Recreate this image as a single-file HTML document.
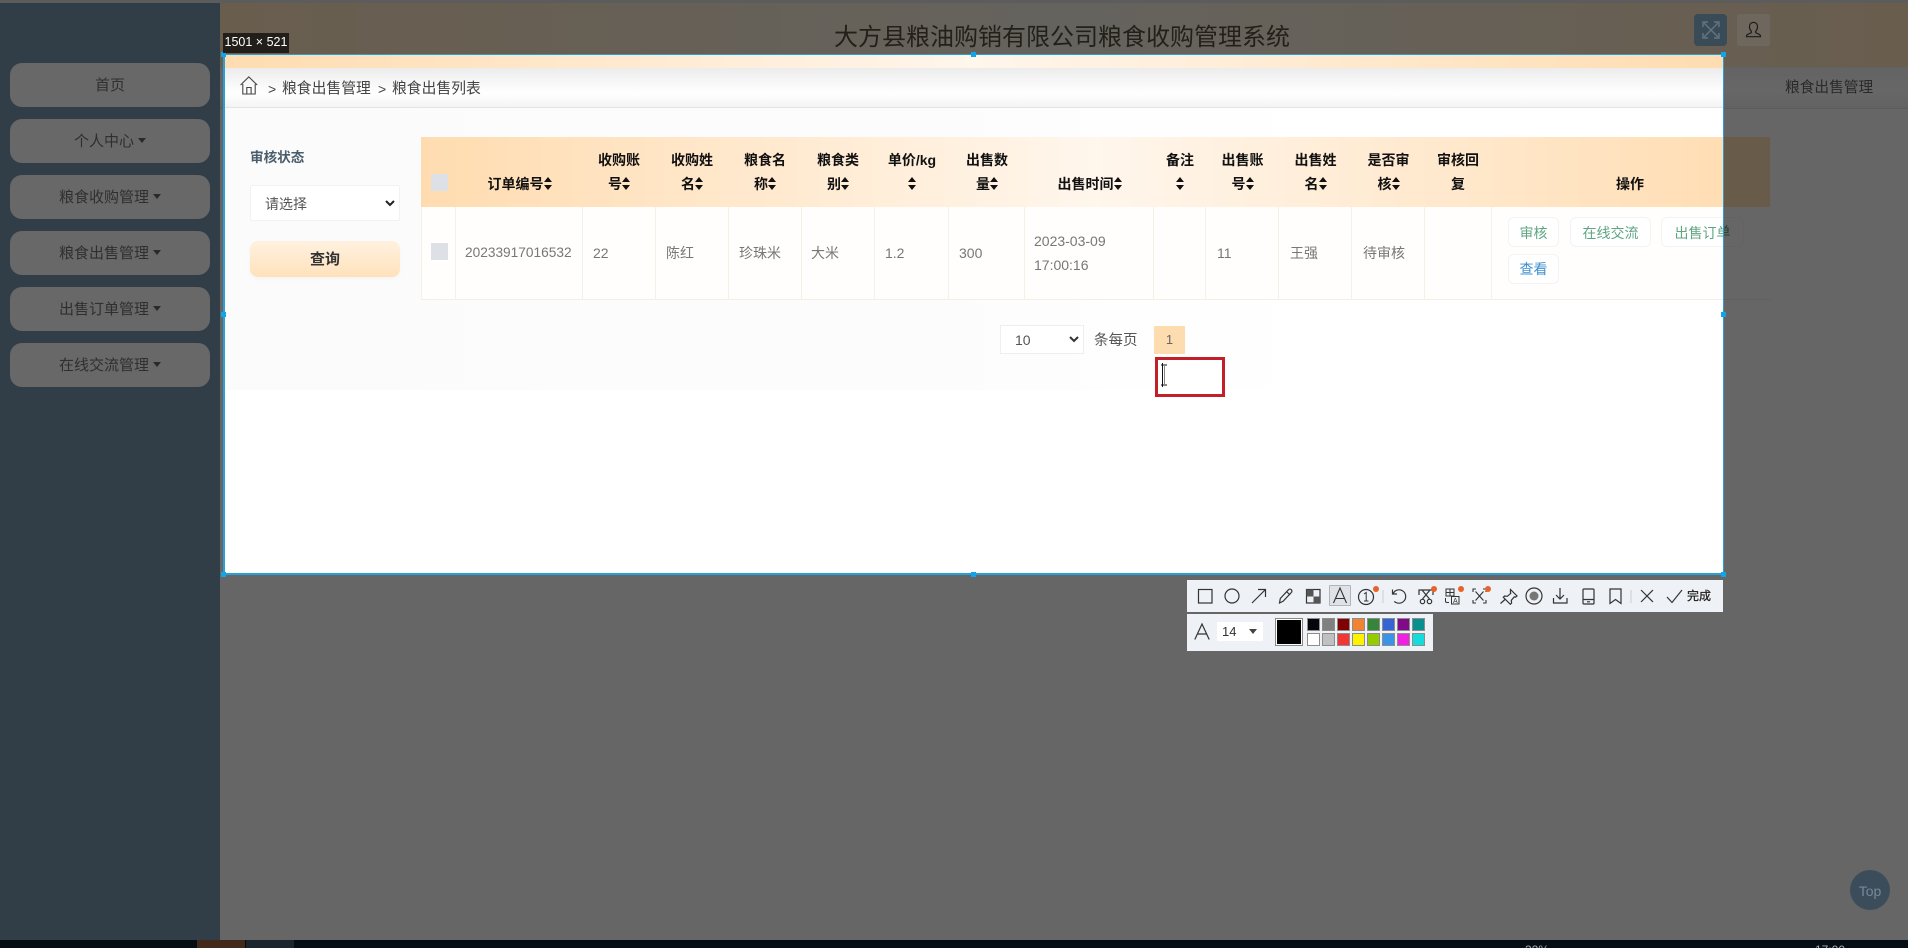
<!DOCTYPE html>
<html lang="zh"><head><meta charset="utf-8"><title>粮食收购管理系统</title>
<style>
*{box-sizing:border-box}
html,body{margin:0;padding:0}
body{width:1908px;height:948px;overflow:hidden;position:relative;background:#666;font-family:"Liberation Sans","Noto Sans CJK SC",sans-serif;font-size:14px}
.a{position:absolute}
.m{position:absolute;left:10px;width:200px;height:44px;border-radius:12px;background:#686868;color:#2f2f2f;font-size:15px;line-height:46px;text-align:center}
.m i{display:inline-block;width:0;height:0;border:4px solid transparent;border-top:5px solid #2a2a2a;border-bottom:0;margin-left:4px;vertical-align:3px}
#sel{position:absolute;left:223px;top:54px;width:1501px;height:521px;overflow:hidden;background:#fff}
#in{position:absolute;left:-223px;top:-54px;width:1908px;height:948px}
#bd{position:absolute;left:223px;top:54px;width:1501px;height:521px;border:1px solid #27a0d8;border-left-width:2px;border-bottom-width:2px;pointer-events:none}
.h{position:absolute;width:5px;height:5px;background:#10a5e8}
.th{position:absolute;top:137px;height:70px;text-align:center;font-weight:bold;color:#111;font-size:14px;line-height:24px;padding-top:11px}
.th svg{display:inline-block;vertical-align:-1px}
.v{position:absolute;top:207px;height:92px;width:1px;background:#f6f1e6}
.td{position:absolute;color:#777;font-size:14px;line-height:24px}
.btn{position:absolute;height:30px;line-height:29px;text-align:center;border:1px solid #f3f3f3;border-radius:6px;background:#fff;font-size:14px;color:#5fa582}
.sw{position:absolute;width:13px;height:13px;border:1px solid #8d8d8d}
svg{display:block;overflow:visible}
select{appearance:none;-webkit-appearance:none;outline:none;margin:0}
</style></head><body>

<!-- dimmed page -->
<div class="a" style="left:0;top:0;width:1908px;height:3px;background:#5c5c5c"></div>
<div class="a" style="left:220px;top:3px;width:1688px;height:64px;background:linear-gradient(90deg,#695d4e,#65635e 50%,#695d4e)"></div>
<div class="a" style="left:220px;top:67px;width:1688px;height:41px;background:linear-gradient(180deg,#636363,#676767 60%,#626262)"></div>
<div class="a" style="left:220px;top:108px;width:1688px;height:1px;background:#5c5c5c"></div>
<div class="a" style="left:223px;top:20px;width:1500px;height:34px;text-align:center;font-size:24px;line-height:34px;color:#232019"><span style="position:relative;left:89px;top:1px">大方县粮油购销有限公司粮食收购管理系统</span></div>
<div class="a" style="left:1785px;top:78px;font-size:14.7px;line-height:20px;color:#2a2a2a;white-space:nowrap">粮食出售管理</div>

<div class="a" style="left:1694px;top:14px;width:33px;height:32px;background:#394b57;border-radius:4px">
<svg width="33" height="32" fill="none" stroke="#62757f" stroke-width="1.400"><path d="M10 9l14 14M24 9L10 23"/><path d="M9 13V8h5M25 13V8h-5M9 19v5h5M25 19v5h-5"/></svg></div>
<div class="a" style="left:1737px;top:14px;width:33px;height:32px;background:#6e675e;border-radius:2px">
<svg width="33" height="32" fill="none" stroke="#1c1c1c" stroke-width="1.200"><path d="M12.500 13c0-3 1.800-4.600 4-4.600s4 1.600 4 4.600c0 2-1 3.400-1.700 4.200-.5.700-.1 1.500.5 1.800l3.200 1.500c.8.400 1 1.100 1 2.200H9.500c0-1.100.2-1.800 1-2.200l3.200-1.500c.6-.3 1-1.100.5-1.800-.7-.8-1.700-2.200-1.700-4.200z"/></svg></div>

<div class="a" style="left:1724px;top:137px;width:46px;height:70px;background:#685b4a"></div>
<div class="a" style="left:1724px;top:299px;width:46px;height:1px;background:#62605c"></div>
<div class="a" style="left:1661px;top:217px;width:83px;height:30px;line-height:29px;text-align:center;border:1px solid #636363;border-radius:6px;font-size:14px;color:#264230">出售订单</div>

<div class="a" style="left:1850px;top:870px;width:40px;height:40px;border-radius:50%;background:#3b4d5b;color:#76889a;font-size:14px;line-height:42px;text-align:center">Top</div>

<!-- sidebar -->
<div class="a" style="left:0;top:3px;width:220px;height:937px;background:#313e48"></div>
<div class="m" style="top:63px">首页</div>
<div class="m" style="top:119px">个人中心<i></i></div>
<div class="m" style="top:175px">粮食收购管理<i></i></div>
<div class="m" style="top:231px">粮食出售管理<i></i></div>
<div class="m" style="top:287px">出售订单管理<i></i></div>
<div class="m" style="top:343px">在线交流管理<i></i></div>

<!-- taskbar -->
<div class="a" style="left:0;top:940px;width:1908px;height:8px;background:#030e15;overflow:hidden">
<div class="a" style="left:197px;top:0;width:48px;height:8px;background:#42291a"></div>
<div class="a" style="left:246px;top:0;width:48px;height:8px;background:#1a252e"></div>
<div class="a" style="left:1525px;top:3px;color:#aab;font-size:12px;line-height:14px">32%</div>
<div class="a" style="left:1815px;top:3px;color:#aab;font-size:12px;line-height:14px">17:00</div>
</div>

<!-- selection -->
<div id="sel"><div id="in">
<div class="a" style="left:223px;top:54px;width:1501px;height:14px;background:linear-gradient(90deg,#ffdcb0,#fff6ec 50%,#ffdcb0)"></div>
<div class="a" style="left:223px;top:68px;width:1501px;height:40px;background:linear-gradient(180deg,#ececec,#fff 65%,#f4f4f4);border-bottom:1px solid #e4e4e4"></div>
<div class="a" style="left:223px;top:108px;width:1100px;height:282px;background:linear-gradient(90deg,#fbfbfb,#fcfcfc 60%,#fff)"></div>

<svg class="a" style="left:240px;top:76px" width="18" height="19" fill="none" stroke="#444" stroke-width="1.100"><path d="M.6 9L8.800.9 17.200 9M2.800 8v10h12.400V8M6.800 18v-6.500h4.300V18"/></svg>
<div class="a" style="left:268px;top:79px;font-size:14px;line-height:20px;color:#444">&gt;</div>
<div class="a" style="left:282px;top:79px;font-size:14.8px;line-height:20px;color:#444;white-space:nowrap">粮食出售管理</div>
<div class="a" style="left:378px;top:79px;font-size:14px;line-height:20px;color:#444">&gt;</div>
<div class="a" style="left:392px;top:79px;font-size:14.8px;line-height:20px;color:#444;white-space:nowrap">粮食出售列表</div>

<div class="a" style="left:250px;top:148px;font-size:13.6px;font-weight:bold;line-height:20px;color:#4a5d6c;white-space:nowrap">审核状态</div>
<select class="a" style="left:250px;top:185px;width:150px;height:36px;background:#fff;border:1px solid #f2f2f2;color:#555;font:14px 'Liberation Sans','Noto Sans CJK SC',sans-serif;padding:2px 0 0 14px;border-radius:2px"><option>请选择</option></select>
<svg class="a" style="left:385px;top:200px" width="10" height="7" fill="none" stroke="#222" stroke-width="2"><path d="M1 1l4 4 4-4"/></svg>
<div class="a" style="left:250px;top:241px;width:150px;height:36px;border-radius:8px;background:linear-gradient(180deg,#fff1df,#ffe2bc);box-shadow:0 2px 4px rgba(0,0,0,.03);text-align:center;line-height:38px;font-weight:bold;font-size:15px;color:#333">查询</div>

<!-- table -->
<div class="a" style="left:421px;top:137px;width:1348px;height:70px;background:linear-gradient(90deg,#ffdcb0,#fff6ec 50%,#ffdcb0)"></div>
<div class="a" style="left:421px;top:207px;width:1348px;height:92px;background:#fffefc"></div>
<div class="a" style="left:421px;top:299px;width:1348px;height:1px;background:#f3efe6"></div>
<div class="v" style="left:421px"></div><div class="v" style="left:455px"></div><div class="v" style="left:582px"></div><div class="v" style="left:655px"></div><div class="v" style="left:728px"></div><div class="v" style="left:801px"></div><div class="v" style="left:874px"></div><div class="v" style="left:948px"></div><div class="v" style="left:1024px"></div><div class="v" style="left:1153px"></div><div class="v" style="left:1205px"></div><div class="v" style="left:1278px"></div><div class="v" style="left:1351px"></div><div class="v" style="left:1424px"></div><div class="v" style="left:1491px"></div>

<div class="a" style="left:431px;top:174px;width:17px;height:17px;background:#dde1e6"></div>
<div class="a" style="left:431px;top:243px;width:17px;height:17px;background:#dde1e6"></div>

<svg width="0" height="0" style="position:absolute"><defs><symbol id="s" viewBox="0 0 8 13"><path d="M4 0l4 5H0zM4 13l4-5H0z" fill="#111"/></symbol></defs></svg>

<div class="th" style="left:456px;width:127px;padding-top:35px">订单编号<svg width="8" height="13"><use href="#s"/></svg></div>
<div class="th" style="left:583px;width:72px">收购账<br>号<svg width="8" height="13"><use href="#s"/></svg></div>
<div class="th" style="left:655px;width:74px">收购姓<br>名<svg width="8" height="13"><use href="#s"/></svg></div>
<div class="th" style="left:729px;width:72px">粮食名<br>称<svg width="8" height="13"><use href="#s"/></svg></div>
<div class="th" style="left:801px;width:74px">粮食类<br>别<svg width="8" height="13"><use href="#s"/></svg></div>
<div class="th" style="left:875px;width:74px">单价/kg<br><svg width="8" height="13"><use href="#s"/></svg></div>
<div class="th" style="left:949px;width:76px">出售数<br>量<svg width="8" height="13"><use href="#s"/></svg></div>
<div class="th" style="left:1025px;width:129px;padding-top:35px">出售时间<svg width="8" height="13"><use href="#s"/></svg></div>
<div class="th" style="left:1154px;width:52px">备注<br><svg width="8" height="13"><use href="#s"/></svg></div>
<div class="th" style="left:1206px;width:73px">出售账<br>号<svg width="8" height="13"><use href="#s"/></svg></div>
<div class="th" style="left:1279px;width:73px">出售姓<br>名<svg width="8" height="13"><use href="#s"/></svg></div>
<div class="th" style="left:1352px;width:73px">是否审<br>核<svg width="8" height="13"><use href="#s"/></svg></div>
<div class="th" style="left:1425px;width:66px">审核回<br>复</div>
<div class="th" style="left:1491px;width:278px;padding-top:35px">操作</div>

<div class="td" style="left:465px;top:241px;font-size:13.7px">20233917016532</div>
<div class="td" style="left:593px;top:241px">22</div>
<div class="td" style="left:666px;top:241px">陈红</div>
<div class="td" style="left:739px;top:241px">珍珠米</div>
<div class="td" style="left:811px;top:241px">大米</div>
<div class="td" style="left:885px;top:241px">1.2</div>
<div class="td" style="left:959px;top:241px">300</div>
<div class="td" style="left:1034px;top:229px;white-space:nowrap">2023-03-09</div>
<div class="td" style="left:1034px;top:253px;white-space:nowrap">17:00:16</div>
<div class="td" style="left:1217px;top:241px">11</div>
<div class="td" style="left:1290px;top:241px">王强</div>
<div class="td" style="left:1363px;top:241px">待审核</div>

<div class="btn" style="left:1508px;top:217px;width:51px;line-height:30px">审核</div>
<div class="btn" style="left:1570px;top:217px;width:81px;line-height:30px">在线交流</div>
<div class="btn" style="left:1661px;top:217px;width:83px;line-height:30px">出售订单</div>
<div class="btn" style="left:1508px;top:254px;width:51px;color:#3f8fd0">查看</div>

<!-- pagination -->
<select class="a" style="left:1000px;top:325px;width:84px;height:29px;background:#fff;border:1px solid #eeeeee;color:#555;font:14px 'Liberation Sans',sans-serif;padding-left:14px"><option>10</option></select>
<svg class="a" style="left:1069px;top:336px" width="10" height="7" fill="none" stroke="#333" stroke-width="2"><path d="M1 1l4 4 4-4"/></svg>
<div class="a" style="left:1094px;top:331px;font-size:14.5px;line-height:20px;color:#555;white-space:nowrap">条每页</div>
<div class="a" style="left:1154px;top:326px;width:31px;height:28px;background:#fddcb0;color:#666;text-align:center;line-height:28px;font-size:13px">1</div>
<div class="a" style="left:1155px;top:357px;width:70px;height:40px;border:3px solid #c21f28;background:#fff"></div>
<svg class="a" style="left:1160px;top:362px" width="8" height="26" fill="none" stroke="#111" stroke-width="1"><path d="M2.500 1v24M1 3h6M1 23h6"/><path d="M4.500 3v20" stroke="#888"/></svg>
</div></div>

<div id="bd"></div>
<div class="h" style="left:221px;top:52px"></div><div class="h" style="left:971px;top:52px"></div><div class="h" style="left:1721px;top:52px"></div>
<div class="h" style="left:221px;top:312px"></div><div class="h" style="left:1721px;top:312px"></div>
<div class="h" style="left:221px;top:572px"></div><div class="h" style="left:971px;top:572px"></div><div class="h" style="left:1721px;top:572px"></div>
<div class="a" style="left:223px;top:33px;width:66px;height:20px;background:#221e1a;color:#fff;font-size:12.5px;line-height:18px;text-align:center;white-space:nowrap">1501 × 521</div>

<!-- toolbars -->
<div class="a" style="left:1187px;top:580px;width:536px;height:32px;background:#eef1f5"></div>
<div class="a" style="left:1329px;top:585px;width:22px;height:21px;background:#dfe3e8;border:1px solid #b1b5ba;border-radius:1px"></div>
<svg class="a" style="left:1187px;top:580px" width="536" height="32" fill="none" stroke="#333" stroke-width="1.200">
<rect x="11.500" y="9.500" width="13.500" height="13.500"/>
<circle cx="45" cy="16" r="7"/>
<path d="M65 23l13-13M71 9.500h7.500V17"/>
<path d="M92.500 23l.8-4.500 8.200-8.800c.8-.8 2-.8 2.800 0s.8 2 0 2.800l-8.200 8.800zM99.500 11.500l3.500 3.500"/>
<rect x="119.500" y="9.500" width="13.500" height="13.500"/>
<path d="M119.500 9.500h7v7h-7zM126.500 16.500h6.500V23h-6.500z" fill="#555" stroke="none"/>
<path d="M146.500 23l6.500-15 6.500 15M149 18.500h9" stroke-width="1.100"/>
<circle cx="179" cy="17" r="7.500"/>
<path d="M177 14l2.200-1.500V21M177 21h4.500" stroke-width="1"/>
<path d="M196 10v13" stroke="#d0d4d8"/>
<path d="M205.500 9.500v4.500h4.500M206 14c1.200-2.800 3.500-4.200 6-4.200 3.800 0 6.700 3 6.700 6.700s-3 6.700-6.700 6.700c-2 0-3.500-.6-4.700-1.800"/>
<path d="M232 15v-5h14v5M235 10l7.500 9M243 10l-7.500 9"/><circle cx="235.500" cy="21.500" r="2.200"/><circle cx="242.500" cy="21.500" r="2.200"/>
<path d="M259 9h8v7h-8zM263 9v7M259 12.500h8M258.500 18v3c0 1 .5 1.500 1.500 1.500h2" stroke-width="1"/><path d="M264.500 16.500h7.500v7.500h-7.500z" stroke-width="1"/>
<text x="266" y="23" font-size="7" fill="#333" stroke="none" font-family="Liberation Sans">A</text>
<path d="M286 12V9h3M296 9h3v3M286 20v3h3M296 23h3v-3M288.500 11.500l8 9M296.500 11.500l-8 9" stroke-width="1.100"/>
<path d="M323.500 9.500l6.500 6.500-1.500 1.200-1.200-.4-3 3.500.3 2.700-1.300 1.300-7-7 1.300-1.300 2.700.3 3.500-3-.4-1.200zM318 19.500l-4.500 4"/>
<circle cx="347" cy="16" r="8"/><circle cx="347" cy="16" r="4.500" fill="#777" stroke="none"/>
<path d="M373 8v11M369 15l4 4 4-4M366.500 18v5h13.500v-5"/>
<rect x="396" y="9" width="11" height="15" rx="1"/><path d="M396 19.500h11M400 21.800h3"/>
<path d="M423 9h11v14.500l-5.500-4-5.500 4z"/>
<path d="M444 10v13" stroke="#d0d4d8"/>
<path d="M454 10l12 12M466 10l-12 12"/>
<path d="M480 17l5 5.500L495 10"/>
</svg>
<div class="a" style="left:1687px;top:586px;font-size:12px;line-height:20px;color:#222;-webkit-text-stroke:.3px #222;white-space:nowrap">完成</div>
<div class="a" style="left:1373px;top:586px;width:6px;height:6px;border-radius:50%;background:#e8622a"></div>
<div class="a" style="left:1431px;top:586px;width:6px;height:6px;border-radius:50%;background:#e8622a"></div>
<div class="a" style="left:1458px;top:586px;width:6px;height:6px;border-radius:50%;background:#e8622a"></div>
<div class="a" style="left:1485px;top:586px;width:6px;height:6px;border-radius:50%;background:#e8622a"></div>

<div class="a" style="left:1187px;top:614px;width:246px;height:37px;background:#eef1f5"></div>
<svg class="a" style="left:1194px;top:623px" width="16" height="17" fill="none" stroke="#333" stroke-width="1.200"><path d="M.8 16.500L8 1l7.200 15.500M3.500 11h9"/></svg>
<div class="a" style="left:1217px;top:622px;width:46px;height:19px;background:#fff;color:#333;font-size:13px;line-height:19px;padding-left:5px">14</div>
<div class="a" style="left:1249px;top:629px;width:0;height:0;border:4.500px solid transparent;border-top:5px solid #444;border-bottom:0"></div>
<div class="a" style="left:1275px;top:618px;width:28px;height:28px;background:#000;border:1px solid #888;box-shadow:inset 0 0 0 1px #fff"></div>

<div class="sw" style="left:1307px;top:618px;background:#03060a"></div><div class="sw" style="left:1322px;top:618px;background:#808080"></div><div class="sw" style="left:1337px;top:618px;background:#7f0303"></div><div class="sw" style="left:1352px;top:618px;background:#f08432"></div><div class="sw" style="left:1367px;top:618px;background:#378538"></div><div class="sw" style="left:1382px;top:618px;background:#3564d4"></div><div class="sw" style="left:1397px;top:618px;background:#800a88"></div><div class="sw" style="left:1412px;top:618px;background:#0a8f8f"></div>
<div class="sw" style="left:1307px;top:633px;background:#fff"></div><div class="sw" style="left:1322px;top:633px;background:#c0c0c0"></div><div class="sw" style="left:1337px;top:633px;background:#f23535"></div><div class="sw" style="left:1352px;top:633px;background:#fff200"></div><div class="sw" style="left:1367px;top:633px;background:#94cc00"></div><div class="sw" style="left:1382px;top:633px;background:#3a93e6"></div><div class="sw" style="left:1397px;top:633px;background:#f020e0"></div><div class="sw" style="left:1412px;top:633px;background:#14dcdc"></div>

</body></html>
